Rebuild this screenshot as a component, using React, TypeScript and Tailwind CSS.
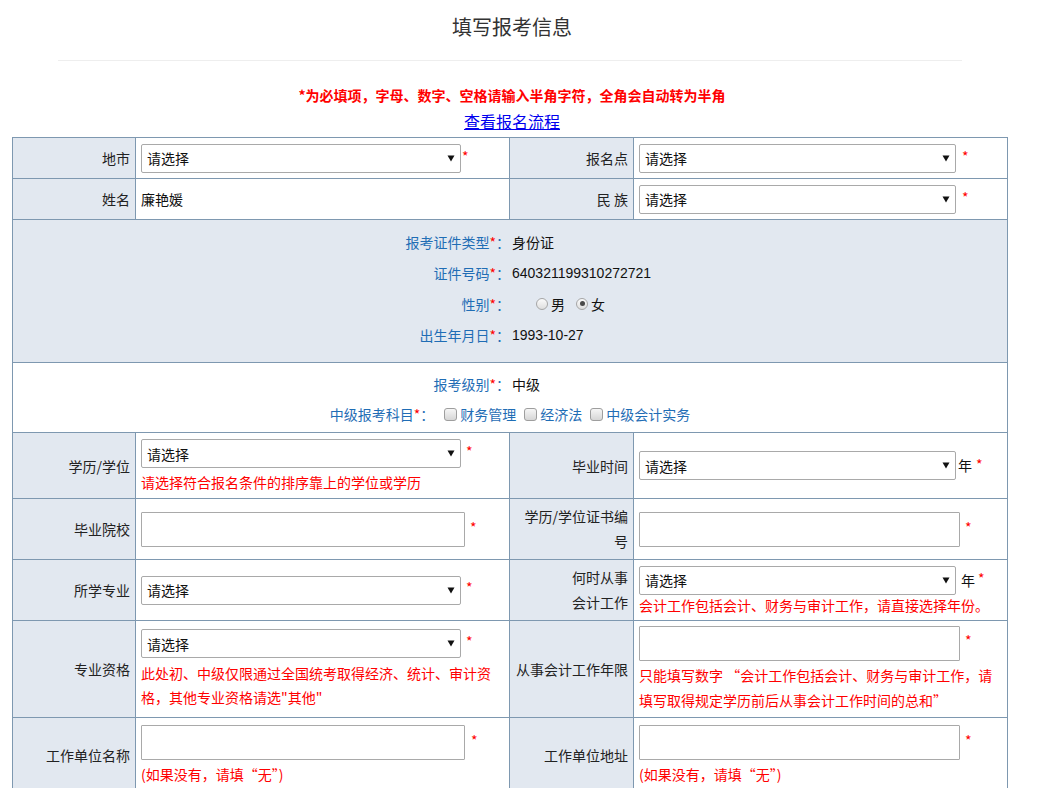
import React from "react";

const Req = ({ className = "" }: { className?: string }) => (
    <span className={`text-[#ff0000] leading-none ${className}`}>*</span>
);

function Select({ className = "" }: { className?: string }) {
    return (
        <div className={`flex h-[29px] shrink-0 items-center justify-between rounded-[2px] border border-[#a9a9a9] bg-white pl-[5px] pr-[5px] text-[#111] ${className}`}>
            <span>请选择</span>
            <svg width="8" height="7" viewBox="0 0 8 7">
                <path d="M0.5 0.5h7L4 6.5z" fill="#111" />
            </svg>
        </div>
    );
}

function TextBox({ className = "" }: { className?: string }) {
    return <div className={`h-[35px] shrink-0 rounded-[1px] border border-[#a9a9a9] bg-white ${className}`} />;
}

function Radio({ checked }: { checked?: boolean }) {
    return (
        <span className="inline-flex h-[12px] w-[12px] items-center justify-center rounded-full border border-[#a6a6a6] bg-linear-to-b from-[#fbfbfb] to-[#dedede]">
            {checked && <span className="h-[5px] w-[5px] rounded-full bg-[#4a4a4a]" />}
        </span>
    );
}

function Checkbox() {
    return <span className="inline-block h-[13px] w-[13px] rounded-[3px] border border-[#9e9e9e] bg-linear-to-b from-[#f6f6f6] to-[#d6d6d6]" />;
}

const label = "flex items-center justify-end border-r border-b border-[#7e98b0] bg-[#e2e8f0] pr-[5px] text-right text-[#222]";
const value = "flex border-r border-b border-[#7e98b0] bg-white pl-[5px] text-[#111]";

function InfoLine({ name, children }: { name: string; children: React.ReactNode }) {
    return (
        <div className="grid h-[31px] grid-cols-2 items-center">
            <div className="text-right text-[#1f6db5]">
                {name}
                <Req />：
            </div>
            <div className="pl-[2px] text-[#111]">{children}</div>
        </div>
    );
}

export default function App() {
    return (
        <div className="h-[788px] w-[1020px] overflow-hidden bg-white text-[14px] font-['Noto_Sans_CJK_SC',sans-serif]">
            <h1 className="pt-[14px] pl-[4px] text-center text-[20px] leading-[26px] text-[#333]">填写报考信息</h1>
            <div className="mx-[58px] mt-[20px] border-t border-[#eeeeee]" />
            <p className="mt-[24px] pl-[4px] text-center text-[14px] font-bold leading-[20px] text-[#ff0000]">
                *为必填项，字母、数字、空格请输入半角字符，全角会自动转为半角
            </p>
            <p className="mt-[6px] pl-[4px] text-center text-[16px] leading-[20px]">
                <a href="#" className="text-[#0000ee] underline">查看报名流程</a>
            </p>

            <div className="ml-[12px] mt-[6px] grid w-[996px] grid-cols-[123px_374px_124px_374px] grid-rows-[41px_41px_143px_70px_66px_61px_61px_97px_74px] border-t border-l border-[#7e98b0] leading-[20px]">
                {/* 地市 / 报名点 */}
                <div className={label}>地市</div>
                <div className={`${value} items-center`}>
                    <Select className="w-[320px]" />
                    <Req className="ml-[1px] mb-[4px]" />
                </div>
                <div className={label}>报名点</div>
                <div className={`${value} items-center`}>
                    <Select className="w-[317px]" />
                    <Req className="ml-[6px] mb-[4px]" />
                </div>

                {/* 姓名 / 民族 */}
                <div className={label}>姓名</div>
                <div className={`${value} items-center`}>廉艳媛</div>
                <div className={label}>民 族</div>
                <div className={`${value} items-center`}>
                    <Select className="w-[317px]" />
                    <Req className="ml-[6px] mb-[4px]" />
                </div>

                {/* 证件信息 */}
                <div className="col-span-4 border-r border-b border-[#7e98b0] bg-[#e2e8f0] pt-[6px]">
                    <InfoLine name="报考证件类型">身份证</InfoLine>
                    <InfoLine name="证件号码">
                        <span className="font-['Liberation_Sans',sans-serif]">640321199310272721</span>
                    </InfoLine>
                    <InfoLine name="性别">
                        <span className="flex items-center pl-[24px]">
                            <Radio />
                            <span className="ml-[3px]">男</span>
                            <span className="ml-[11px]" />
                            <Radio checked />
                            <span className="ml-[3px]">女</span>
                        </span>
                    </InfoLine>
                    <InfoLine name="出生年月日">
                        <span className="font-['Liberation_Sans',sans-serif]">1993-10-27</span>
                    </InfoLine>
                </div>

                {/* 报考级别 */}
                <div className="col-span-4 border-r border-b border-[#7e98b0] bg-white pt-[6px]">
                    <div className="grid h-[30px] grid-cols-2 items-center">
                        <div className="text-right text-[#1f6db5]">
                            报考级别<Req />：
                        </div>
                        <div className="pl-[2px] text-[#111]">中级</div>
                    </div>
                    <div className="flex h-[30px] items-center justify-center text-[#1f6db5]">
                        <span>
                            中级报考科目<Req />：
                        </span>
                        <span className="ml-[10px] flex items-center">
                            <Checkbox />
                            <span className="ml-[3px]">财务管理</span>
                        </span>
                        <span className="ml-[8px] flex items-center">
                            <Checkbox />
                            <span className="ml-[3px]">经济法</span>
                        </span>
                        <span className="ml-[8px] flex items-center">
                            <Checkbox />
                            <span className="ml-[3px]">中级会计实务</span>
                        </span>
                    </div>
                </div>

                {/* 学历/学位 / 毕业时间 */}
                <div className={label}>学历/学位</div>
                <div className={`${value} flex-col justify-center`}>
                    <div className="flex items-center">
                        <Select className="w-[320px]" />
                        <Req className="ml-[5px] mb-[6px]" />
                    </div>
                    <div className="mt-[4px] text-[#ff0000]">请选择符合报名条件的排序靠上的学位或学历</div>
                </div>
                <div className={label}>毕业时间</div>
                <div className={`${value} items-center`}>
                    <Select className="w-[317px]" />
                    <span className="ml-[2px] mb-[2px]">年</span>
                    <Req className="ml-[4px] mb-[4px]" />
                </div>

                {/* 毕业院校 / 证书编号 */}
                <div className={label}>毕业院校</div>
                <div className={`${value} items-center`}>
                    <TextBox className="w-[324px]" />
                    <Req className="ml-[5px] mb-[4px]" />
                </div>
                <div className={`${label} leading-[25px]`}>
                    <span>
                        学历/学位证书编
                        <br />号
                    </span>
                </div>
                <div className={`${value} items-center`}>
                    <TextBox className="w-[321px]" />
                    <Req className="ml-[5px] mb-[4px]" />
                </div>

                {/* 所学专业 / 何时从事会计工作 */}
                <div className={label}>所学专业</div>
                <div className={`${value} items-center`}>
                    <Select className="w-[320px]" />
                    <Req className="ml-[5px] mb-[6px]" />
                </div>
                <div className={`${label} leading-[25px]`}>
                    <span>
                        何时从事
                        <br />会计工作
                    </span>
                </div>
                <div className={`${value} flex-col justify-center`}>
                    <div className="flex items-center">
                        <Select className="w-[317px]" />
                        <span className="ml-[5px]">年</span>
                        <Req className="ml-[3px] mb-[4px]" />
                    </div>
                    <div className="text-[#ff0000]">会计工作包括会计、财务与审计工作，请直接选择年份。</div>
                </div>

                {/* 专业资格 / 从事会计工作年限 */}
                <div className={label}>专业资格</div>
                <div className={`${value} flex-col justify-center`}>
                    <div className="flex items-center">
                        <Select className="w-[320px]" />
                        <Req className="ml-[5px] mb-[6px]" />
                    </div>
                    <div className="mt-[3px] leading-[24px] text-[#ff0000]">
                        此处初、中级仅限通过全国统考取得经济、统计、审计资
                        <br />
                        格，其他专业资格请选"其他"
                    </div>
                </div>
                <div className={label}>从事会计工作年限</div>
                <div className={`${value} flex-col justify-center`}>
                    <div className="flex items-center">
                        <TextBox className="w-[321px]" />
                        <Req className="ml-[5px] mb-[6px]" />
                    </div>
                    <div className="mt-[2px] leading-[25px] text-[#ff0000]">
                        只能填写数字 “会计工作包括会计、财务与审计工作，请
                        <br />
                        填写取得规定学历前后从事会计工作时间的总和”
                    </div>
                </div>

                {/* 工作单位 */}
                <div className={label}>工作单位名称</div>
                <div className={`${value} flex-col justify-center`}>
                    <div className="flex items-center">
                        <TextBox className="w-[324px]" />
                        <Req className="ml-[6px] mb-[6px]" />
                    </div>
                    <div className="mt-[4px] text-[#ff0000]">(如果没有，请填“无”)</div>
                </div>
                <div className={label}>工作单位地址</div>
                <div className={`${value} flex-col justify-center`}>
                    <div className="flex items-center">
                        <TextBox className="w-[321px]" />
                        <Req className="ml-[5px] mb-[6px]" />
                    </div>
                    <div className="mt-[4px] text-[#ff0000]">(如果没有，请填“无”)</div>
                </div>
            </div>
        </div>
    );
}
